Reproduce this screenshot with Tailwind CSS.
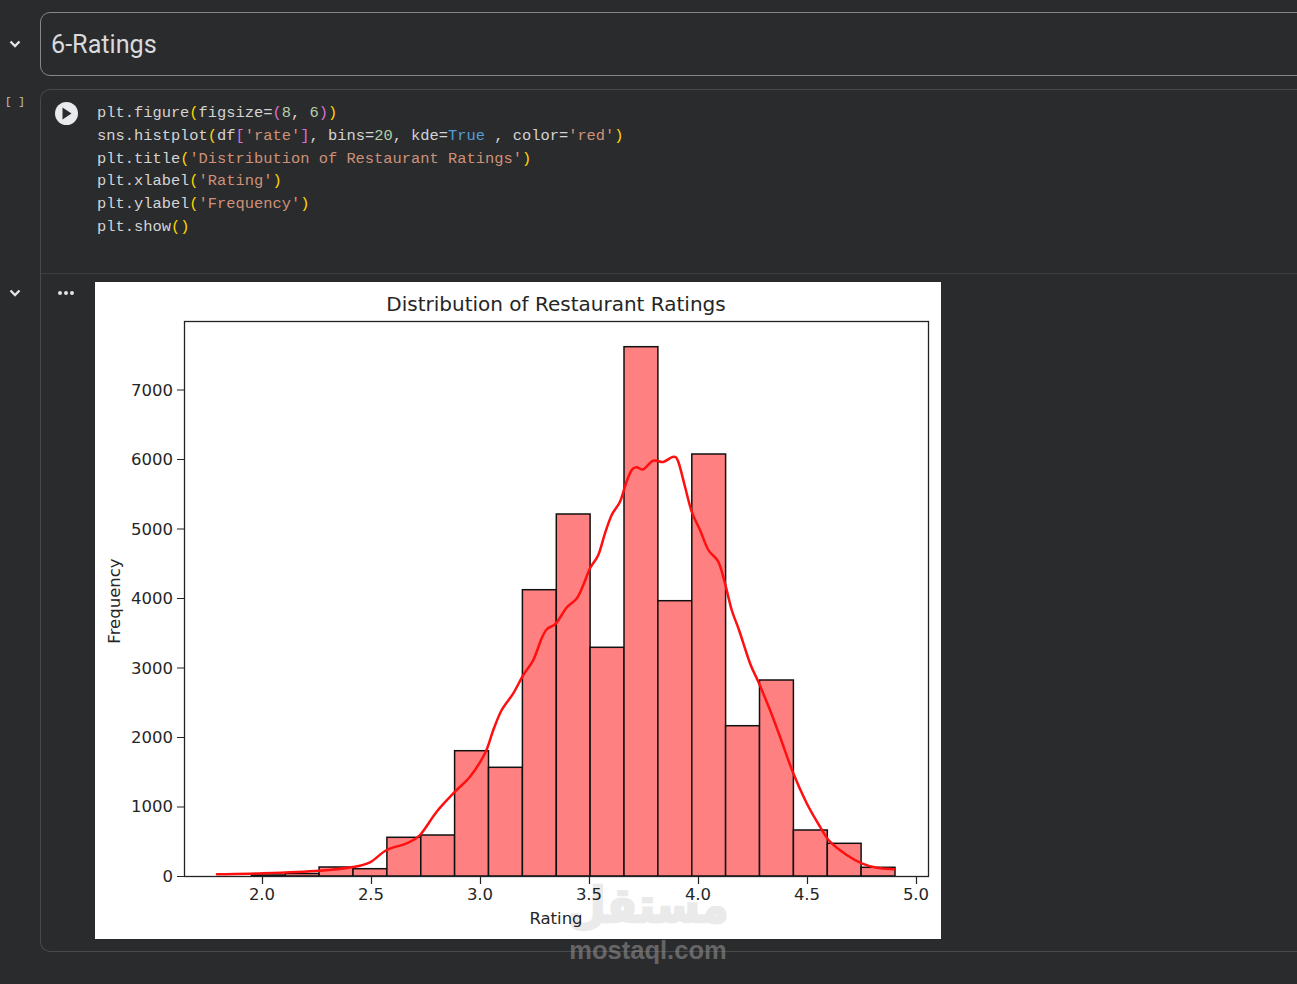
<!doctype html>
<html lang="en">
<head>
<meta charset="utf-8">
<title>6-Ratings</title>
<script src="https://cdn.jsdelivr.net/npm/@tailwindcss/browser@4"></script>
</head>
<body class="bg-[#2a2b2d] overflow-hidden h-[984px] relative">
  <div class="w-[1400px] pt-3">

    <!-- markdown cell -->
    <section class="flex">
      <div class="w-10 flex items-center justify-center pr-[10px]">
        <svg class="w-5 h-5 shrink-0 text-[#e3e3e3]" viewBox="0 0 20 20" fill="none" stroke="currentColor" stroke-width="2.400"><path d="M5.500 7.500 10 12l4.500-4.500"/></svg>
      </div>
      <div class="flex-1 h-[64px] border border-[#85878a] rounded-l-[10px] pl-[10px] pt-[1px] flex items-center">
        <h2 class="font-['Roboto',sans-serif] text-[25.200px] text-[#d8dade]">6-Ratings</h2>
      </div>
    </section>

    <!-- code cell -->
    <section class="flex mt-[13px]">
      <div class="w-10 shrink-0 pr-[10px]">
        <div class="font-['Liberation_Mono',monospace] text-[11px] text-[#c4c6c9] text-center pt-[5px]">[ ]</div>
      </div>
      <div class="flex-1 h-[863px] border border-r-0 border-[#47494c] rounded-l-[10px]">
        <div class="flex h-[184px] border-b border-[#3c3e41] pt-[12px]">
          <div class="w-[56px] shrink-0 flex justify-center pr-[6px]">
            <div class="w-[23px] h-[23px] rounded-full bg-[#e8eaed] flex items-center justify-center">
              <svg class="w-[11px] h-[13px]" viewBox="0 0 11 13"><path d="M1.500 0.500 10.500 6.500 1.500 12.500z" fill="#2a2b2d"/></svg>
            </div>
          </div>
          <pre class="font-['Liberation_Mono',monospace] text-[15.400px] leading-[22.800px] text-[#d4d4d4]">plt.figure<span class="text-[#ffd700]">(</span>figsize=<span class="text-[#da70d6]">(</span><span class="text-[#b5cea8]">8</span>, <span class="text-[#b5cea8]">6</span><span class="text-[#da70d6]">)</span><span class="text-[#ffd700]">)</span>
sns.histplot<span class="text-[#ffd700]">(</span>df<span class="text-[#da70d6]">[</span><span class="text-[#ce9178]">'rate'</span><span class="text-[#da70d6]">]</span>, bins=<span class="text-[#b5cea8]">20</span>, kde=<span class="text-[#569cd6]">True</span> , color=<span class="text-[#ce9178]">'red'</span><span class="text-[#ffd700]">)</span>
plt.title<span class="text-[#ffd700]">(</span><span class="text-[#ce9178]">'Distribution of Restaurant Ratings'</span><span class="text-[#ffd700]">)</span>
plt.xlabel<span class="text-[#ffd700]">(</span><span class="text-[#ce9178]">'Rating'</span><span class="text-[#ffd700]">)</span>
plt.ylabel<span class="text-[#ffd700]">(</span><span class="text-[#ce9178]">'Frequency'</span><span class="text-[#ffd700]">)</span>
plt.show<span class="text-[#ffd700]">()</span></pre>
        </div>

        <div class="flex pt-2">
          <div class="w-[54px] shrink-0 flex justify-center pt-[8px] pr-[4px]">
            <svg class="w-[20px] h-[6px]" viewBox="0 0 20 6" fill="#e3e3e3"><circle cx="4" cy="3" r="2"/><circle cx="10" cy="3" r="2"/><circle cx="16" cy="3" r="2"/></svg>
          </div>
          <!-- matplotlib output -->
          <svg class="block w-[846px] h-[657px] bg-white" viewBox="95 282 846 657" font-family="'DejaVu Sans',sans-serif" fill="#262626">
            <text x="556" y="311" font-size="20" text-anchor="middle">Distribution of Restaurant Ratings</text>
            <g fill="#ff8080" stroke="#111111" stroke-width="1.500">
              <rect x="251.400" y="875" width="33.900" height="1"/>
              <rect x="285.300" y="873.500" width="33.800" height="2.500"/>
              <rect x="319.100" y="867" width="33.900" height="9"/>
              <rect x="353" y="868.700" width="33.900" height="7.300"/>
              <rect x="386.900" y="837.300" width="33.900" height="38.700"/>
              <rect x="420.800" y="835" width="33.800" height="41"/>
              <rect x="454.600" y="750.700" width="33.900" height="125.300"/>
              <rect x="488.500" y="767.300" width="33.900" height="108.700"/>
              <rect x="522.400" y="589.700" width="33.900" height="286.300"/>
              <rect x="556.300" y="514" width="33.800" height="362"/>
              <rect x="590.100" y="647.300" width="33.900" height="228.700"/>
              <rect x="624" y="346.700" width="33.900" height="529.300"/>
              <rect x="657.900" y="600.700" width="33.900" height="275.300"/>
              <rect x="691.800" y="454" width="33.800" height="422"/>
              <rect x="725.600" y="725.700" width="33.900" height="150.300"/>
              <rect x="759.500" y="680" width="33.900" height="196"/>
              <rect x="793.400" y="830" width="33.900" height="46"/>
              <rect x="827.300" y="843.300" width="33.800" height="32.700"/>
              <rect x="861.100" y="867.300" width="33.900" height="8.700"/>
            </g>
            <path id="kde" fill="none" stroke="#ff0f0f" stroke-width="2.500" stroke-linejoin="round" stroke-linecap="round" d=""/>
            <rect x="184.500" y="321.500" width="744" height="555" fill="none" stroke="#222222" stroke-width="1.300"/>
            <g stroke="#222222" stroke-width="1.200">
              <path d="M177 876.500h7M177 807h7M177 737.500h7M177 668h7M177 598.500h7M177 529h7M177 459.500h7M177 390h7"/>
              <path d="M262.500 877v7M371.500 877v7M480.500 877v7M589.500 877v7M698.500 877v7M807.500 877v7M916.500 877v7"/>
            </g>
            <g font-size="16.500" text-anchor="end">
              <text x="173" y="882">0</text>
              <text x="173" y="812">1000</text>
              <text x="173" y="743">2000</text>
              <text x="173" y="674">3000</text>
              <text x="173" y="604">4000</text>
              <text x="173" y="535">5000</text>
              <text x="173" y="465">6000</text>
              <text x="173" y="396">7000</text>
            </g>
            <g font-size="16.500" text-anchor="middle">
              <text x="262" y="900">2.0</text>
              <text x="371" y="900">2.5</text>
              <text x="480" y="900">3.0</text>
              <text x="589" y="900">3.5</text>
              <text x="698" y="900">4.0</text>
              <text x="807" y="900">4.5</text>
              <text x="916" y="900">5.0</text>
              <text x="556" y="924">Rating</text>
              <text transform="translate(120 601) rotate(-90)">Frequency</text>
            </g>
          </svg>
        </div>
      </div>
    </section>
  </div>

  <!-- output chevron -->
  <svg class="absolute left-[5px] top-[283px] w-5 h-5 text-[#e3e3e3]" viewBox="0 0 20 20" fill="none" stroke="currentColor" stroke-width="2.400"><path d="M5.500 7.500 10 12l4.500-4.500"/></svg>

  <!-- watermark -->
  <div class="absolute left-[566px] top-[880px] w-[164px] text-center pointer-events-none">
    <div class="font-['DejaVu_Sans',sans-serif] font-bold text-[44px] leading-[56px] text-black opacity-[0.08] [-webkit-text-stroke:2.500px_#000] origin-bottom scale-y-[1.1]" dir="rtl">مستقل</div>
    <div class="font-['Liberation_Sans',sans-serif] font-bold text-[25.500px] leading-[26px] mt-[1px] text-[#9a9a9a]/55">mostaql.com</div>
  </div>

  <script>
    // catmull-rom through points read off the plot
    var pts = [[217,874.3],[263,873.3],[320,870.7],[353,867],[370,862.3],[386.7,850],[406.7,843.3],[420,835],[436.7,811.7],[455,791.7],[470,776.7],[485,753.3],[493.3,730],[501.7,710],[513.3,693.3],[523.3,675],[533.3,660],[541.7,638.3],[547,629],[556,623.3],[566.7,607.5],[576.7,598.5],[583.3,585],[590,568.3],[598.3,555],[605,533.3],[611.7,515],[620,501.7],[626,483.3],[631.7,470],[636.7,467.3],[643.3,469.3],[653.3,460.7],[663.3,462],[673.3,456.7],[678.3,461.7],[685,486.7],[691.7,511.7],[700,530],[708.3,550],[718.3,561.7],[725,583.3],[731.7,610],[739,630],[750,663.3],[758.3,681.7],[770,710],[780,736.7],[793.3,773.3],[806.7,803.3],[820,826.7],[830,841.7],[846.7,855],[861.7,863.3],[876.7,867.7],[894,869.3]];
    var d = 'M' + pts[0].join(' ');
    for (var i = 0; i < pts.length - 1; i++) {
      var a = pts[i - 1] || pts[i], b = pts[i], c = pts[i + 1], e = pts[i + 2] || c;
      d += ' C' + (b[0] + (c[0] - a[0]) / 6) + ' ' + (b[1] + (c[1] - a[1]) / 6) + ' ' + (c[0] - (e[0] - b[0]) / 6) + ' ' + (c[1] - (e[1] - b[1]) / 6) + ' ' + c[0] + ' ' + c[1];
    }
    document.getElementById('kde').setAttribute('d', d);
  </script>
</body>
</html>
